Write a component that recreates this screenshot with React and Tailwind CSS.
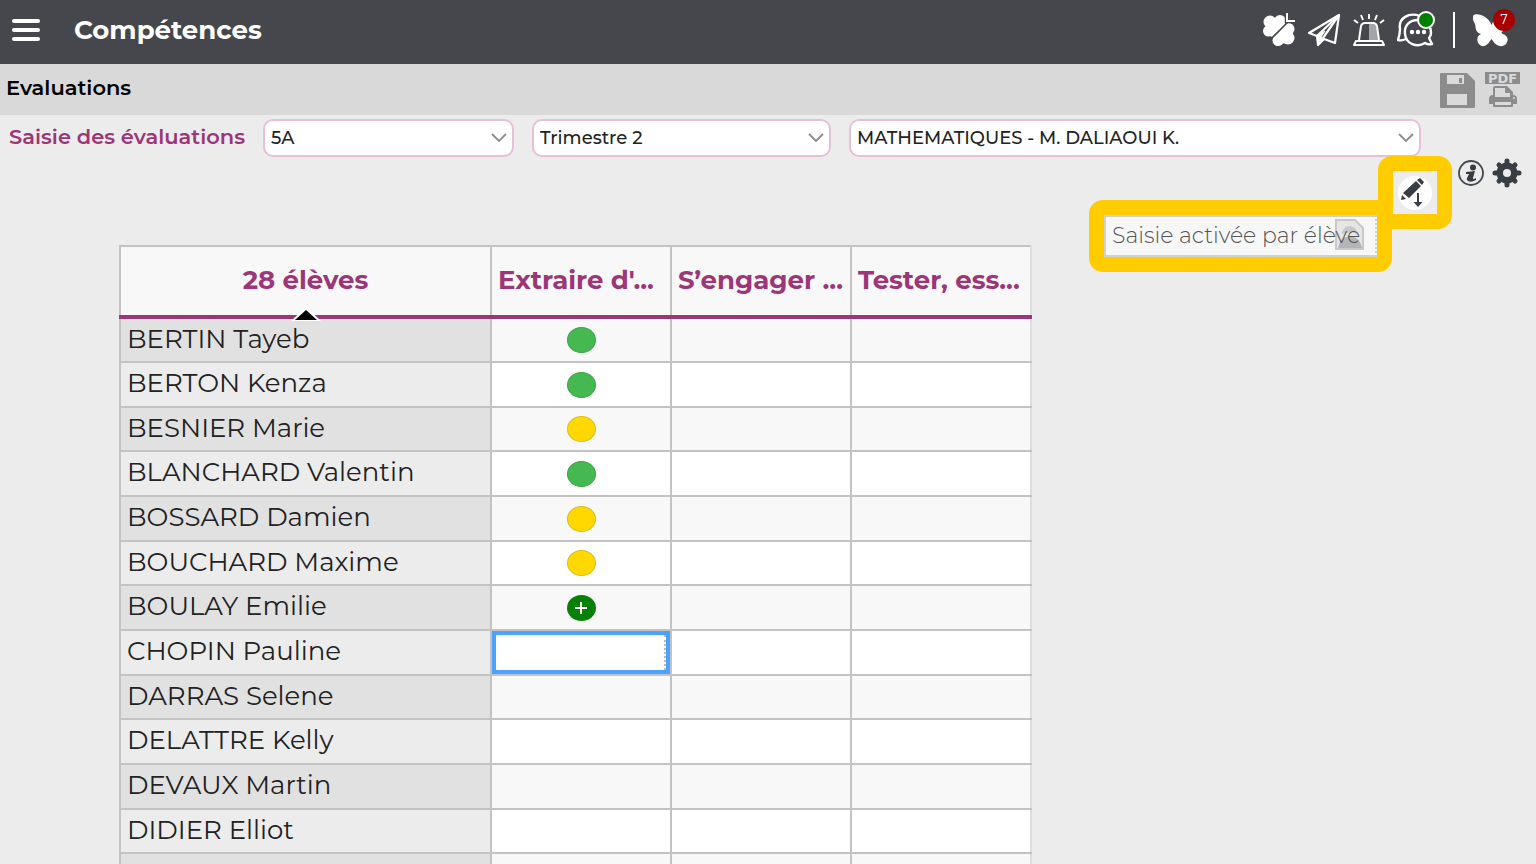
const students = [
  ["BERTIN Tayeb", "green"],
  ["BERTON Kenza", "green"],
  ["BESNIER Marie", "yellow"],
  ["BLANCHARD Valentin", "green"],
  ["BOSSARD Damien", "yellow"],
  ["BOUCHARD Maxime", "yellow"],
  ["BOULAY Emilie", "plus"],
  ["CHOPIN Pauline", "input"],
  ["DARRAS Selene", null],
  ["DELATTRE Kelly", null],
  ["DEVAUX Martin", null],
  ["DIDIER Elliot", null],
  ["", null],
];

const skills = ["Extraire d'...", "S’engager ...", "Tester, ess..."];

function CloverIcon() {
  return (
    <svg viewBox="0 0 34 34" className="h-[34px] w-[34px]" fill="#fff">
      <circle cx="8" cy="9" r="6.5" />
      <circle cx="18" cy="8" r="6" />
      <circle cx="6.5" cy="18" r="5.5" />
      <path d="M6 8L20 5L22 13L10 24L4 20Z" />
      <circle cx="26.500" cy="16" r="6" />
      <circle cx="26" cy="25" r="6.5" />
      <circle cx="16" cy="27.500" r="5.5" />
      <path d="M11 25L25 10L31 20L27 30L15 31Z" />
      <path d="M8 27L26 9" stroke="#46474c" strokeWidth="1.6" />
      <path d="M25 1V8H33" fill="none" stroke="#46474c" strokeWidth="4.500" />
      <path d="M25 0V8H33" fill="none" stroke="#fff" strokeWidth="2" />
    </svg>
  );
}

function PlaneIcon() {
  return (
    <svg viewBox="0 0 34 34" className="h-[34px] w-[34px]" fill="none" stroke="#fff" strokeWidth="2.2" strokeLinejoin="round">
      <path d="M32 2L2 20L10 23L32 2L28 30L17 26L11 32L10 23" />
      <path d="M32 2L16 25" />
      <path d="M10 23L11 32L17 26L14 24L18 18Z" fill="#fff" strokeWidth="1" />
    </svg>
  );
}

function SirenIcon() {
  return (
    <svg viewBox="0 0 34 34" className="h-[34px] w-[34px]" fill="none" stroke="#fff" strokeWidth="2" strokeLinejoin="round">
      <path d="M17 11H21C24 11 25 12 25 14L27 27H17Z" fill="#a3a4a8" stroke="none" />
      <path d="M7 27L9 13Q10 10 13 10H21Q24 10 25 13L27 27" />
      <path d="M4 28H30L32 32H2Z" />
      <path d="M17 1V6M9 2L11 7M25 2L23 7M2 7L6 10M32 7L28 10" />
    </svg>
  );
}

function ChatIcon() {
  return (
    <svg viewBox="0 0 38 34" className="h-[34px] w-[38px]" fill="none" stroke="#fff" strokeWidth="2.4" strokeLinejoin="round">
      <path d="M23 3C12-1 1 5 3 16Q3 21 1 27Q5 28 9 26" />
      <path d="M8 21C7 12 13 7 21 7C29 7 34 13 34 20Q34 23 32 25L35 31Q31 32 28 30C20 35 9 31 8 21Z" />
      <g fill="#fff" stroke="none">
        <circle cx="15" cy="19" r="2.2" />
        <circle cx="21" cy="19" r="2.2" />
        <circle cx="27" cy="19" r="2.2" />
      </g>
    </svg>
  );
}

function ButterflyIcon() {
  return (
    <svg viewBox="0 0 36 34" className="h-[34px] w-9" fill="#fff">
      <path d="M0 3C2-1 15 2 18.500 12C22 3 31 0 35 3C35 10 34 15 30 18Q27 20 30 21C35 23 36 27 33 31C29 35 23 33 20 28L18.500 26L17 28C14 33 9 35 6 31C3 27 4 23 8 21C2 19 3 15 2 11Q-1 6 0 3Z" />
    </svg>
  );
}

function SaveIcon() {
  return (
    <svg viewBox="0 0 36 36" className="h-9 w-9">
      <path d="M1 1H27L35 9V35Q35 36 34 36H1Q0 36 0 35V2Q0 1 1 1Z" fill="#8c8c8c" />
      <path d="M7 3H24V12H7ZM7 22H27V33H7Z" fill="#dadada" />
      <path d="M19 6H22V11H19Z" fill="#8c8c8c" />
    </svg>
  );
}

function PrinterIcon() {
  return (
    <svg viewBox="0 0 30 22" className="h-[22px] w-[30px]">
      <path d="M5 9V2Q5 0 7 0H19L25 6V9Q29 9 29 13V18H25V20Q25 21 24 21H6Q5 21 5 20V18H1V13Q1 9 5 9Z" fill="#8c8c8c" />
      <path d="M7 2H17V7H22V11H7ZM7 16H23V19H7Z" fill="#dadada" />
      <circle cx="26" cy="12" r="1" fill="#dadada" />
    </svg>
  );
}

function InfoIcon() {
  return (
    <svg viewBox="0 0 26 26" className="h-[26px] w-[26px]">
      <circle cx="13" cy="13" r="12" fill="none" stroke="#44474d" strokeWidth="1.8" />
      <circle cx="15" cy="7.500" r="3" fill="#393d44" />
      <path d="M8 12L17 11L15 18Q15 20 18 18V20Q13 23 10 21Q8 20 9 18L11 14H8Z" fill="#393d44" />
    </svg>
  );
}

function GearIcon() {
  return (
    <svg viewBox="0 0 30 30" className="h-[30px] w-[30px]" fill="#393d44">
      <g stroke="#393d44" strokeWidth="5" strokeLinecap="round">
        <path d="M15 3V27M3 15H27M7 7L23 23M23 7L7 23" />
      </g>
      <circle cx="15" cy="15" r="10.500" />
      <circle cx="15" cy="15" r="4" fill="#ececec" />
    </svg>
  );
}

function PencilIcon() {
  return (
    <svg viewBox="0 0 34 34" className="h-[34px] w-[34px]" fill="#393d44">
      <circle cx="17" cy="17" r="17" fill="#fff" />
      <path d="M18 5L23 10L11 22L5 17ZM19 4L22 2L26 6L24 9ZM4 19L8 23L3 24Z" />
      <path d="M20 17V28" stroke="#393d44" strokeWidth="2" />
      <path d="M15.500 26H24.500L20 31Z" />
    </svg>
  );
}

function PhotoIcon() {
  return (
    <svg viewBox="0 0 30 32" className="h-8 w-[30px]">
      <path d="M1 1H20L28 9V30H1Z" fill="#e6e6e6" stroke="#c8c8c8" strokeWidth="2" />
      <path d="M7 15Q8 7 15 7Q22 8 22 15L18 13L12 14Z" fill="#c8c8c8" />
      <path d="M3 29Q5 20 11 18H19Q25 20 27 29Z" fill="#b4b5b6" />
    </svg>
  );
}

function Picker({ label, value, className }) {
  return (
    <div className={"relative " + className}>
      <select
        aria-label={label}
        className="h-[38px] w-full appearance-none rounded-[10px] border-2 border-[#e6bfdb] bg-white pr-8 pl-1.5 text-[18px] font-medium text-[#222]"
      >
        <option>{value}</option>
      </select>
      <svg viewBox="0 0 16 10" className="pointer-events-none absolute top-3.5 right-[7px] h-2.5 w-4" fill="none" stroke="#8c8c8c" strokeWidth="1.8">
        <path d="M1 1L8 8L15 1" />
      </svg>
    </div>
  );
}

function Level({ kind }) {
  if (kind === "green")
    return <span className="mx-auto block h-[26px] w-[29px] rounded-[50%] border border-[#3aa548] bg-[#46b852]" />;
  if (kind === "yellow")
    return <span className="mx-auto block h-[26px] w-[29px] rounded-[50%] border border-[#dcbc1c] bg-[#ffd800]" />;
  if (kind === "plus")
    return (
      <span className="mx-auto flex h-[26px] w-[29px] items-center justify-center rounded-[50%] bg-[#068006]">
        <svg viewBox="0 0 12 12" className="h-3 w-3" stroke="#fff" strokeWidth="2">
          <path d="M6 0V12M0 6H12" />
        </svg>
      </span>
    );
  if (kind === "input")
    return (
      <div className="border-4 border-[#4ba3fb]">
        <input
          aria-label="Niveau de CHOPIN Pauline"
          className="block h-[35px] w-full border-r-2 border-dotted border-[#bbb] bg-white outline-none"
        />
      </div>
    );
  return null;
}

export default function App() {
  return (
    <div className="flex h-screen flex-col overflow-hidden bg-[#ececec] font-['Montserrat','Inter',sans-serif] text-[#222]">
      <header className="flex h-16 shrink-0 items-center bg-[#46474c] pr-[27px] pb-1 pl-3 text-white">
        <button aria-label="Menu" className="flex w-7 flex-col gap-[5px]">
          <span className="h-1 rounded-sm bg-white" />
          <span className="h-1 rounded-sm bg-white" />
          <span className="h-1 rounded-sm bg-white" />
        </button>
        <h1 className="ml-[34px] text-[26px] leading-8 font-bold">Compétences</h1>
        <nav className="ml-auto flex items-center gap-[11px]">
          <button aria-label="Vie scolaire"><CloverIcon /></button>
          <button aria-label="Messages"><PlaneIcon /></button>
          <button aria-label="Alerte"><SirenIcon /></button>
          <button aria-label="Discussions" className="relative">
            <ChatIcon />
            <span className="absolute -top-0.5 right-0 h-[18px] w-[18px] rounded-full border-2 border-white bg-[#008000]" />
          </button>
          <span className="mx-[7px] h-9 w-0.5 bg-white" />
          <button aria-label="Notifications" className="relative">
            <ButterflyIcon />
            <span className="absolute -top-1 -right-1.5 h-[22px] w-[22px] rounded-full bg-[#a80000] text-center font-['DejaVu_Serif',serif] text-[13px] leading-[22px]">7</span>
          </button>
        </nav>
      </header>

      <div className="flex h-[51px] shrink-0 items-center bg-[#d9d9d9] pr-4 pl-1.5">
        <h2 className="pb-1 text-[21px] font-semibold text-black">Evaluations</h2>
        <div className="ml-auto flex items-center gap-[9px]">
          <button aria-label="Enregistrer"><SaveIcon /></button>
          <button aria-label="Imprimer en PDF" className="flex flex-col items-center gap-0.5">
            <span className="h-3 w-[35px] bg-[#8c8c8c] text-center font-['DejaVu_Sans',sans-serif] text-[13px] leading-[13px] font-bold text-[#dadada]">PDF</span>
            <PrinterIcon />
          </button>
        </div>
      </div>

      <main className="relative min-h-0 flex-1">
        <div className="flex items-center pt-1 pl-[9px]">
          <span className="w-[254px] pb-0.5 text-[21px] font-semibold text-[#9b3677]">Saisie des évaluations</span>
          <Picker label="Classe" value="5A" className="w-[251px]" />
          <Picker label="Période" value="Trimestre 2" className="ml-[18px] w-[299px]" />
          <Picker label="Service" value="MATHEMATIQUES - M. DALIAOUI K." className="ml-[18px] w-[572px]" />
        </div>

        <table className="mt-[88px] ml-[119px] w-[911px] table-fixed border-collapse">
          <colgroup>
            <col className="w-[371px]" />
            <col className="w-[180px]" />
            <col className="w-[180px]" />
            <col className="w-[180px]" />
          </colgroup>
          <thead>
            <tr className="h-[71px] bg-[#f8f8f8] text-[26px] leading-8 text-[#9b3677]">
              <th className="relative border-2 border-b-4 border-[#c3c3c3] border-b-[#9b3677] p-0 pb-0.5 font-bold">
                28 élèves
                <svg viewBox="0 0 30 14" className="absolute -bottom-1.5 left-1/2 h-3.5 w-[30px] -translate-x-1/2">
                  <path d="M15 0L30 14H0Z" fill="#fff" />
                  <path d="M15 3L26 13H4Z" fill="#000" />
                </svg>
              </th>
              {skills.map((s) => (
                <th key={s} className="border-2 border-b-4 border-[#c3c3c3] border-b-[#9b3677] p-0 pb-0.5 pl-1.5 text-left font-bold whitespace-nowrap last:border-r-[#dedede]">{s}</th>
              ))}
            </tr>
          </thead>
          <tbody>
            {students.map(([name, kind], i) => (
              <tr key={i} className="h-[45px] bg-white odd:bg-[#f8f8f8] nth-[3n]:h-11">
                <td className={"border-2 border-[#c3c3c3] p-0 pb-[3px] pl-1.5 text-[26px] leading-8 " + (i % 2 ? "bg-[#ececec]" : "bg-[#e1e1e1]")}>{name}</td>
                <td className="border-2 border-[#c3c3c3] p-0"><Level kind={kind} /></td>
                <td className="border-2 border-[#c3c3c3] p-0" />
                <td className="border-2 border-[#c3c3c3] border-r-[#dedede] p-0" />
              </tr>
            ))}
          </tbody>
        </table>

        <div className="absolute top-[43px] right-3.5 flex items-center gap-2">
          <button aria-label="Informations"><InfoIcon /></button>
          <button aria-label="Paramètres"><GearIcon /></button>
        </div>
        <div className="absolute top-[85px] right-36 flex h-[72px] w-[303px] items-center rounded-[14px] border-[15px] border-[#fc0] bg-[#f7f7f7]">
          <div className="flex h-full w-full items-center border-2 border-[#d0d0d0] pb-0.5 pl-1.5 [border-right-style:dotted]">
            <span className="relative z-10 text-[22px] whitespace-nowrap text-[#555] font-light">Saisie activée par élève</span>
          </div>
          <span className="absolute top-1 right-3"><PhotoIcon /></span>
        </div>
        <button aria-label="Saisie par élève" className="absolute top-[41px] right-[84px] flex h-[73px] w-[74px] items-center justify-center rounded-[14px] border-[15px] border-[#fc0] bg-[#ececec]">
          <PencilIcon />
        </button>
      </main>
    </div>
  );
}
